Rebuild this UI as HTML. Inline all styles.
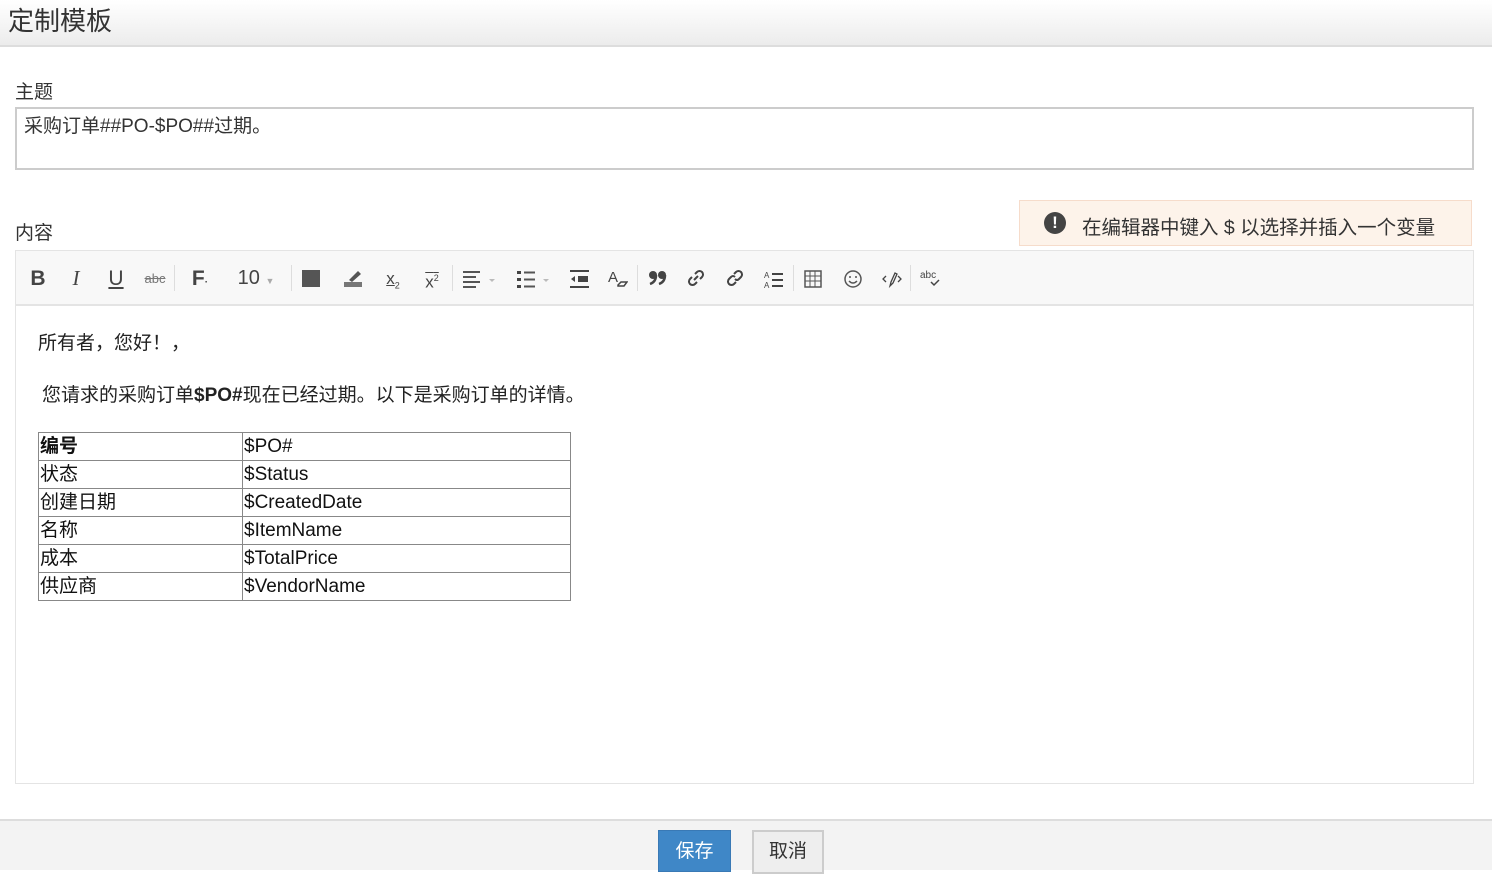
<!DOCTYPE html>
<html><head><meta charset="utf-8"><style>
body{margin:0;width:1492px;height:868px;position:relative;overflow:hidden;background:#fff;font-family:"Liberation Sans","Noto Sans CJK SC",sans-serif;color:#333}
.hdr{position:absolute;left:0;top:0;width:1492px;height:45px;background:linear-gradient(#fff,#ececec);border-bottom:2px solid #ddd}
.hdr span{position:absolute;left:8px;top:1px;font-size:26px;color:#333}
.lbl{position:absolute;font-size:19px;color:#333}
.subj{position:absolute;left:15px;top:107px;width:1455px;height:59px;border:2px solid #ccc;font-size:19px}
.subj span{position:absolute;left:7px;top:2px}
.note{position:absolute;left:1019px;top:200px;width:453px;height:46px;background:#fdf3ea;border:1px solid #f6dccb;box-sizing:border-box}
.note .ic{position:absolute;left:24px;top:11px;width:22px;height:22px;border-radius:50%;background:#444;color:#fff;font-weight:bold;font-size:17px;text-align:center;line-height:22px}
.note .t{position:absolute;left:62px;top:10px;font-size:19.5px;color:#333;white-space:nowrap}
.tb{position:absolute;left:15px;top:250px;width:1457px;height:53px;background:#f8f8f8;border:1px solid #e4e4e4;border-bottom:2px solid #e4e4e4}
.ti{position:absolute;top:0;height:53px;line-height:55px;transform:translateX(-50%);font-size:21px;color:#444}
.sep{position:absolute;top:14px;width:1px;height:26px;background:#ddd}
.ed{position:absolute;left:15px;top:306px;width:1457px;height:477px;border:1px solid #e4e4e4;border-top:none}
.p1{position:absolute;left:38px;top:328px;font-size:19px;color:#222}
.p2{position:absolute;left:42px;top:380px;font-size:19px;color:#222}
table{position:absolute;left:38px;top:432px;border-collapse:collapse;font-size:19px;color:#111}
td{border:1px solid #888;height:27px;padding:0 1px;line-height:27px;vertical-align:bottom}
.ft{position:absolute;left:0;top:819px;width:1492px;height:49px;background:#f3f3f3;border-top:2px solid #ddd}
.bs{position:absolute;left:658px;top:830px;width:71px;height:40px;background:#3f87c7;border:1px solid #3979b5;color:#fff;font-size:19px;text-align:center;line-height:42px}
.bc{position:absolute;left:752px;top:830px;width:68px;height:40px;background:#eee;border:2px solid #ccc;color:#333;font-size:19px;text-align:center;line-height:40px}
</style></head><body>
<div class="hdr"><span>定制模板</span></div>
<div class="lbl" style="left:15px;top:77px">主题</div>
<div class="subj"><span>采购订单##PO-$PO##过期。</span></div>
<div class="lbl" style="left:15px;top:218px">内容</div>
<div class="note"><div class="ic">!</div><div class="t">在编辑器中键入 $ 以选择并插入一个变量</div></div>
<div class="tb">
<div class="ti" style="left:22px;font-weight:bold">B</div>
<div class="ti" style="left:60px;font-style:italic;font-family:'Liberation Serif'">I</div>
<div class="ti" style="left:100px;text-decoration:underline">U</div>
<div class="ti" style="left:139px;font-size:13px;text-decoration:line-through;color:#777">abc</div>
<div class="sep" style="left:158px"></div>
<div class="ti" style="left:184px;font-weight:bold">F<span style="font-size:10px">·</span></div>
<div class="ti" style="left:240px;font-size:20px">10 <span style="font-size:9px;color:#aaa">▼</span></div>
<div class="sep" style="left:275px"></div>
<div style="position:absolute;left:286px;top:19px;width:18px;height:17px;background:#555"></div>
<svg style="position:absolute;left:327px;top:17px" width="20" height="20"><rect x="1" y="14" width="18" height="5" fill="#777"/><path d="M6 12 L15 3 L18 6 L9 14 Z" fill="#555"/></svg>
<div class="ti" style="left:377px;font-size:17px;text-decoration:underline">x<sub style="font-size:9px">2</sub></div>
<div class="ti" style="left:416px;font-size:17px;text-decoration:overline">x<sup style="font-size:9px">2</sup></div>
<div class="sep" style="left:436px"></div>
<svg style="position:absolute;left:446px;top:19px" width="40" height="18"><path d="M1 2h17M1 7h13M1 12h17M1 17h13" stroke="#555" stroke-width="2"/><path d="M27 9l3 3 3-3z" fill="#bbb"/></svg>
<svg style="position:absolute;left:500px;top:19px" width="40" height="18"><path d="M1 1h4v3h-4zM1 8h4v3h-4zM1 15h4v3h-4z" fill="#444"/><path d="M8 2.5h11M8 9.5h11M8 16.5h11" stroke="#555" stroke-width="2"/><path d="M27 9l3 3 3-3z" fill="#bbb"/></svg>
<svg style="position:absolute;left:553px;top:19px" width="20" height="18"><path d="M1 1h19M1 17h19" stroke="#444" stroke-width="2"/><rect x="9" y="6" width="10" height="6" fill="#444"/><path d="M2 9l4-3v6z" fill="#444"/></svg>
<svg style="position:absolute;left:592px;top:17px" width="20" height="22"><text x="0" y="14" font-size="15" fill="#444" font-family="Liberation Sans">A</text><path d="M10 17l3-3h6l-3 4h-6z" fill="none" stroke="#444" stroke-width="1.5"/></svg>
<div class="sep" style="left:621px"></div>
<svg style="position:absolute;left:632px;top:19px" width="20" height="16"><circle cx="5" cy="5" r="4" fill="#444"/><path d="M8 5q0 7-6 9" stroke="#444" stroke-width="2.5" fill="none"/><circle cx="14" cy="5" r="4" fill="#444"/><path d="M17 5q0 7-6 9" stroke="#444" stroke-width="2.5" fill="none"/></svg>
<svg style="position:absolute;left:670px;top:17px" width="20" height="20" fill="none" stroke="#444" stroke-width="2"><path d="M8 12l4-4"/><path d="M9 6l2-2a3.5 3.5 0 0 1 5 5l-2 2"/><path d="M11 14l-2 2a3.5 3.5 0 0 1-5-5l2-2"/></svg>
<svg style="position:absolute;left:709px;top:17px" width="20" height="20" fill="none" stroke="#444" stroke-width="2"><path d="M9 6l2-2a3.5 3.5 0 0 1 5 5l-2 2q-2 2-4 0"/><path d="M11 14l-2 2a3.5 3.5 0 0 1-5-5l2-2q2-2 4 0"/></svg>
<svg style="position:absolute;left:748px;top:19px" width="20" height="18"><text x="0" y="8" font-size="8" fill="#444">A</text><text x="0" y="18" font-size="8" fill="#444">A</text><path d="M8 4h11M8 10h11M8 16h11" stroke="#444" stroke-width="2"/></svg>
<div class="sep" style="left:777px"></div>
<svg style="position:absolute;left:788px;top:19px" width="18" height="18"><rect x="1" y="1" width="16" height="16" fill="none" stroke="#555" stroke-width="1.5"/><path d="M1 6h16M1 11h16M6 1v16M11 1v16" stroke="#555"/></svg>
<svg style="position:absolute;left:827px;top:18px" width="20" height="20"><circle cx="10" cy="10" r="8" fill="none" stroke="#555" stroke-width="1.5"/><circle cx="7" cy="8" r="1" fill="#555"/><circle cx="13" cy="8" r="1" fill="#555"/><path d="M6 12q4 4 8 0" fill="none" stroke="#555" stroke-width="1.5"/></svg>
<svg style="position:absolute;left:865px;top:17px" width="22" height="22" fill="none" stroke="#444" stroke-width="1.3"><path d="M5 8l-3 3 3 3M17 8l3 3-3 3"/><path d="M9 18l1-4 4-9 2 1-4 9z"/></svg>
<div class="sep" style="left:894px"></div>
<svg style="position:absolute;left:904px;top:17px" width="22" height="22"><text x="0" y="10" font-size="10" fill="#444" font-family="Liberation Sans">abc</text><path d="M11 14l3 3 5-5" stroke="#444" stroke-width="1.5" fill="none"/></svg>
</div>
<div class="ed"></div>
<div class="p1">所有者，您好！，</div>
<div class="p2">您请求的采购订单<b>$PO#</b>现在已经过期。以下是采购订单的详情。</div>
<table>
<tr><td style="width:201px"><b>编号</b></td><td style="width:325px">$PO#</td></tr>
<tr><td>状态</td><td>$Status</td></tr>
<tr><td>创建日期</td><td>$CreatedDate</td></tr>
<tr><td>名称</td><td>$ItemName</td></tr>
<tr><td>成本</td><td>$TotalPrice</td></tr>
<tr><td>供应商</td><td>$VendorName</td></tr>
</table>
<div class="ft"></div>
<div class="bs">保存</div>
<div class="bc">取消</div>
</body></html>
